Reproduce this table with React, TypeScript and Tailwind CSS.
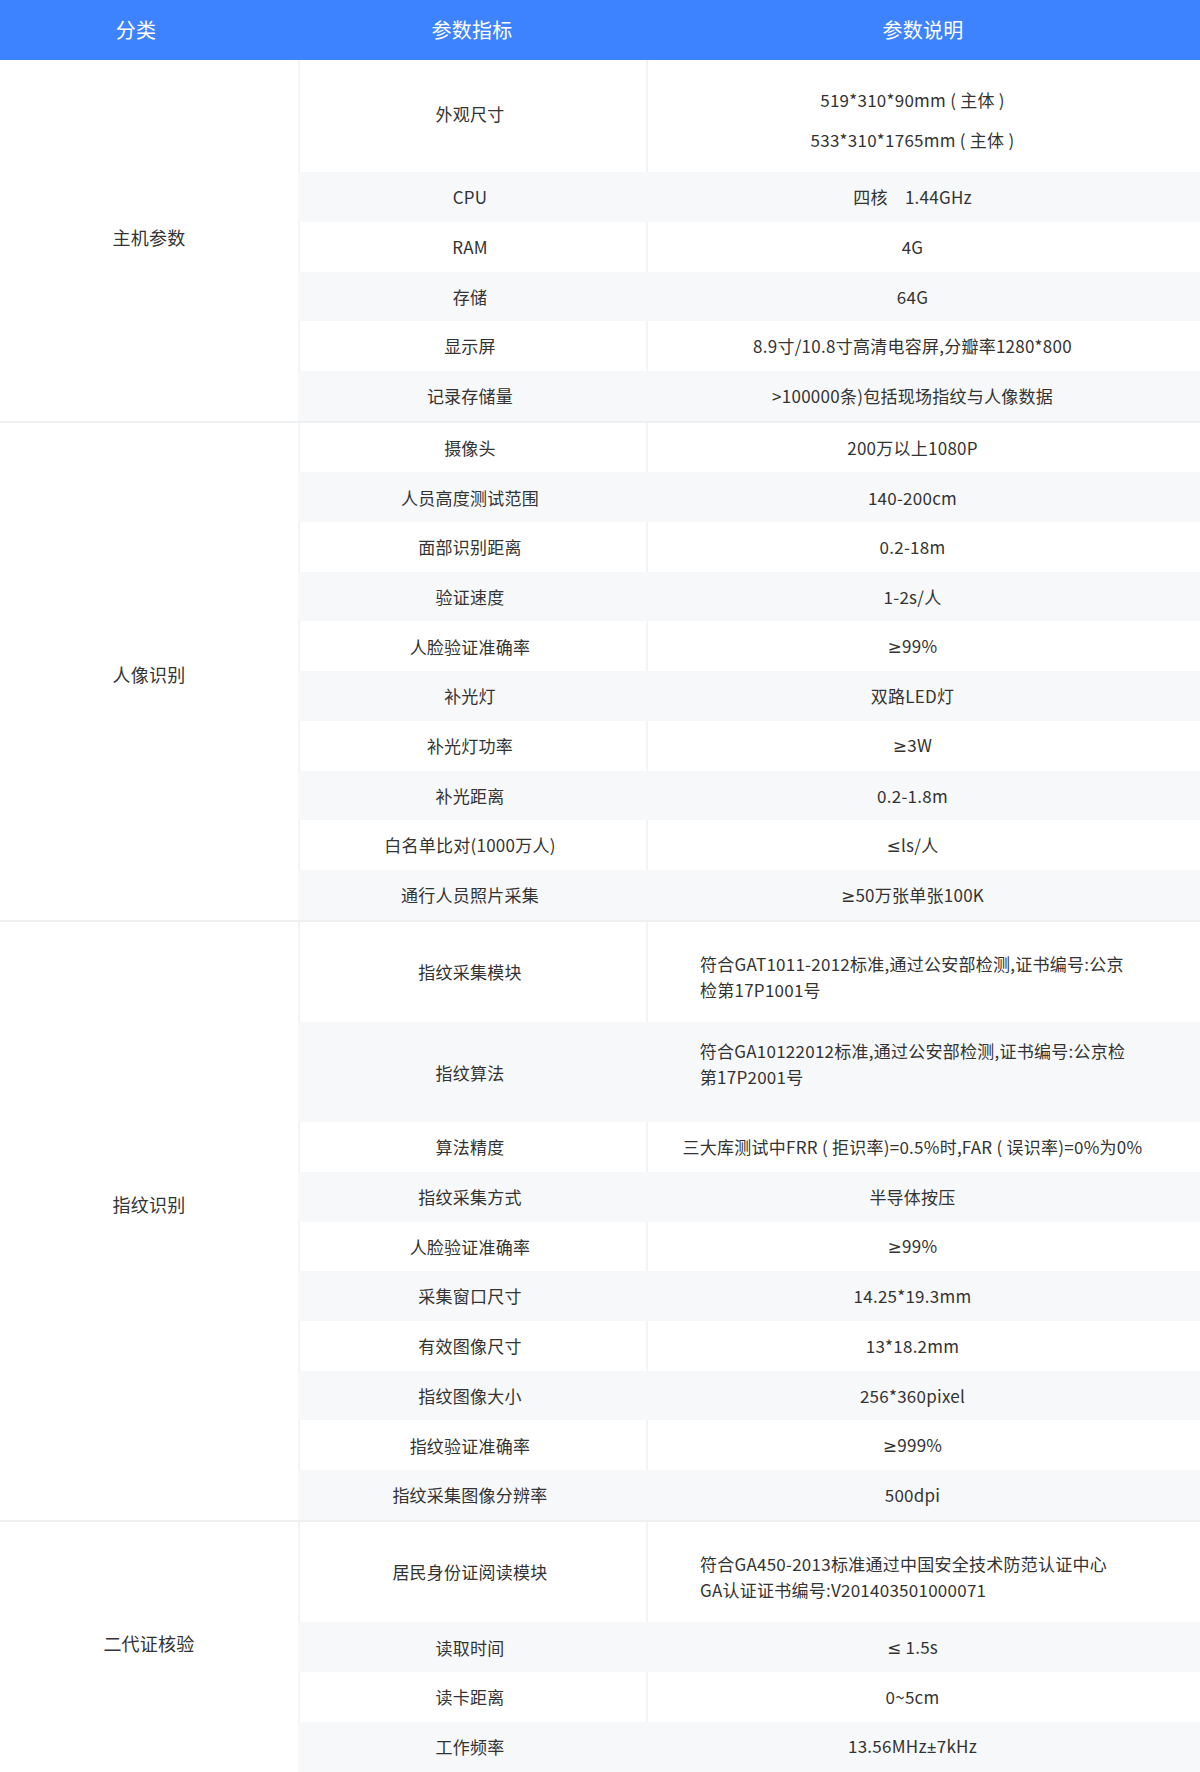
import React from "react";

type Row = {
  label: string;
  value: React.ReactNode;
  tall?: "a" | "b" | "c" | "d";
  wrap?: boolean;
};

type Section = { name: string; rows: Row[]; nameClass: string };

const Sym = ({ c }: { c: string }) => (
  <span style={{ fontFamily: '"Noto Sans", "DejaVu Sans", sans-serif' }}>{c}</span>
);

const sections: Section[] = [
  {
    name: "主机参数",
    nameClass: "pb-[6px]",
    rows: [
      {
        label: "外观尺寸",
        tall: "a",
        value: (
          <div className="flex flex-col items-center leading-[40px] pt-[8px]">
            <span>519*310*90mm ( 主体 )</span>
            <span>533*310*1765mm ( 主体 )</span>
          </div>
        ),
      },
      { label: "CPU", value: "四核\u30001.44GHz" },
      { label: "RAM", value: "4G" },
      { label: "存储", value: "64G" },
      { label: "显示屏", value: "8.9寸/10.8寸高清电容屏,分瓣率1280*800" },
      { label: "记录存储量", value: ">100000条)包括现场指纹与人像数据" },
    ],
  },
  {
    name: "人像识别",
    nameClass: "pt-[6px]",
    rows: [
      { label: "摄像头", value: "200万以上1080P" },
      { label: "人员高度测试范围", value: "140-200cm" },
      { label: "面部识别距离", value: "0.2-18m" },
      { label: "验证速度", value: "1-2s/人" },
      { label: "人脸验证准确率", value: <><Sym c="≥" />99%</> },
      { label: "补光灯", value: "双路LED灯" },
      { label: "补光灯功率", value: <><Sym c="≥" />3W</> },
      { label: "补光距离", value: "0.2-1.8m" },
      { label: "白名单比对(1000万人)", value: <><Sym c="≤" />ls/人</> },
      { label: "通行人员照片采集", value: <><Sym c="≥" />50万张单张100K</> },
    ],
  },
  {
    name: "指纹识别",
    nameClass: "pb-[32px]",
    rows: [
      {
        label: "指纹采集模块",
        tall: "b",
        wrap: true,
        value: (
          <>
            符合GAT1011-2012标准,通过公安部检测,证书编号:公京
            <br />
            检第17P1001号
          </>
        ),
      },
      {
        label: "指纹算法",
        tall: "c",
        wrap: true,
        value: (
          <>
            符合GA10122012标准,通过公安部检测,证书编号:公京检
            <br />
            第17P2001号
          </>
        ),
      },
      {
        label: "算法精度",
        value: "三大库测试中FRR ( 拒识率)=0.5%时,FAR ( 误识率)=0%为0%",
      },
      { label: "指纹采集方式", value: "半导体按压" },
      { label: "人脸验证准确率", value: <><Sym c="≥" />99%</> },
      { label: "采集窗口尺寸", value: "14.25*19.3mm" },
      { label: "有效图像尺寸", value: "13*18.2mm" },
      { label: "指纹图像大小", value: "256*360pixel" },
      { label: "指纹验证准确率", value: <><Sym c="≥" />999%</> },
      { label: "指纹采集图像分辨率", value: "500dpi" },
    ],
  },
  {
    name: "二代证核验",
    nameClass: "pb-[6px]",
    rows: [
      {
        label: "居民身份证阅读模块",
        tall: "d",
        wrap: true,
        value: (
          <>
            符合GA450-2013标准通过中国安全技术防范认证中心
            <br />
            GA认证证书编号:V201403501000071
          </>
        ),
      },
      { label: "读取时间", value: <><Sym c="≤" /> 1.5s</> },
      { label: "读卡距离", value: "0~5cm" },
      { label: "工作频率", value: <>13.56MHz<Sym c="±" />7kHz</> },
    ],
  },
];

function heightClass(t?: Row["tall"]) {
  if (t === "a") return "h-[112.3px]";
  if (t === "b") return "h-[100.7px]";
  if (t === "c") return "h-[100px]";
  if (t === "d") return "h-[100.7px]";
  return "h-[49.7px]";
}

function wrapShift(t?: Row["tall"]) {
  if (t === "c") return "pb-[16px]";
  return "pt-[10px]";
}

function SpecRow({ row, striped }: { row: Row; striped: boolean }) {
  const bg = striped ? "bg-[#f7f8fa]" : "bg-white";
  const border = striped ? "border-transparent" : "border-[#f3f4f6]";
  return (
    <div className={`flex ${heightClass(row.tall)} ${bg}`}>
      <div
        className={`w-[348px] shrink-0 border-l-2 ${border} pr-[6px] flex items-center justify-center ${
          row.tall === "a" ? "pb-[4px]" : ""
        }`}
      >
        <span className="whitespace-nowrap">{row.label}</span>
      </div>
      <div
        className={`w-[554px] shrink-0 border-l-2 ${border} pl-[52px] pr-[75px] flex items-center justify-center`}
      >
        {row.wrap ? (
          <div className={`w-[427px] whitespace-nowrap text-left leading-[26px] ${wrapShift(row.tall)}`}>
            {row.value}
          </div>
        ) : (
          <div className="whitespace-nowrap text-center">{row.value}</div>
        )}
      </div>
    </div>
  );
}

export default function App() {
  return (
    <div
      className="w-[1200px] bg-white text-[#333333] text-[17px] tracking-[0.25px]"
      style={{ fontFamily: '"Noto Sans CJK SC", "Noto Sans", sans-serif' }}
    >
      <div className="flex h-[60px] bg-[#3d83ff] text-white text-[20px]">
        <div className="w-[298px] shrink-0 pr-[26px] flex items-center justify-center">分类</div>
        <div className="w-[348px] shrink-0 flex items-center justify-center">参数指标</div>
        <div className="w-[554px] shrink-0 flex items-center justify-center">参数说明</div>
      </div>
      {sections.map((sec, si) => (
        <div
          key={sec.name}
          className={`flex ${si > 0 ? "border-t-2 border-[#eff0f2]" : ""}`}
        >
          <div
            className={`w-[298px] shrink-0 flex items-center justify-center text-[18px] ${sec.nameClass}`}
          >
            <span>{sec.name}</span>
          </div>
          <div className="flex flex-col">
            {sec.rows.map((r, ri) => (
              <SpecRow key={ri} row={r} striped={ri % 2 === 1} />
            ))}
          </div>
        </div>
      ))}
    </div>
  );
}
